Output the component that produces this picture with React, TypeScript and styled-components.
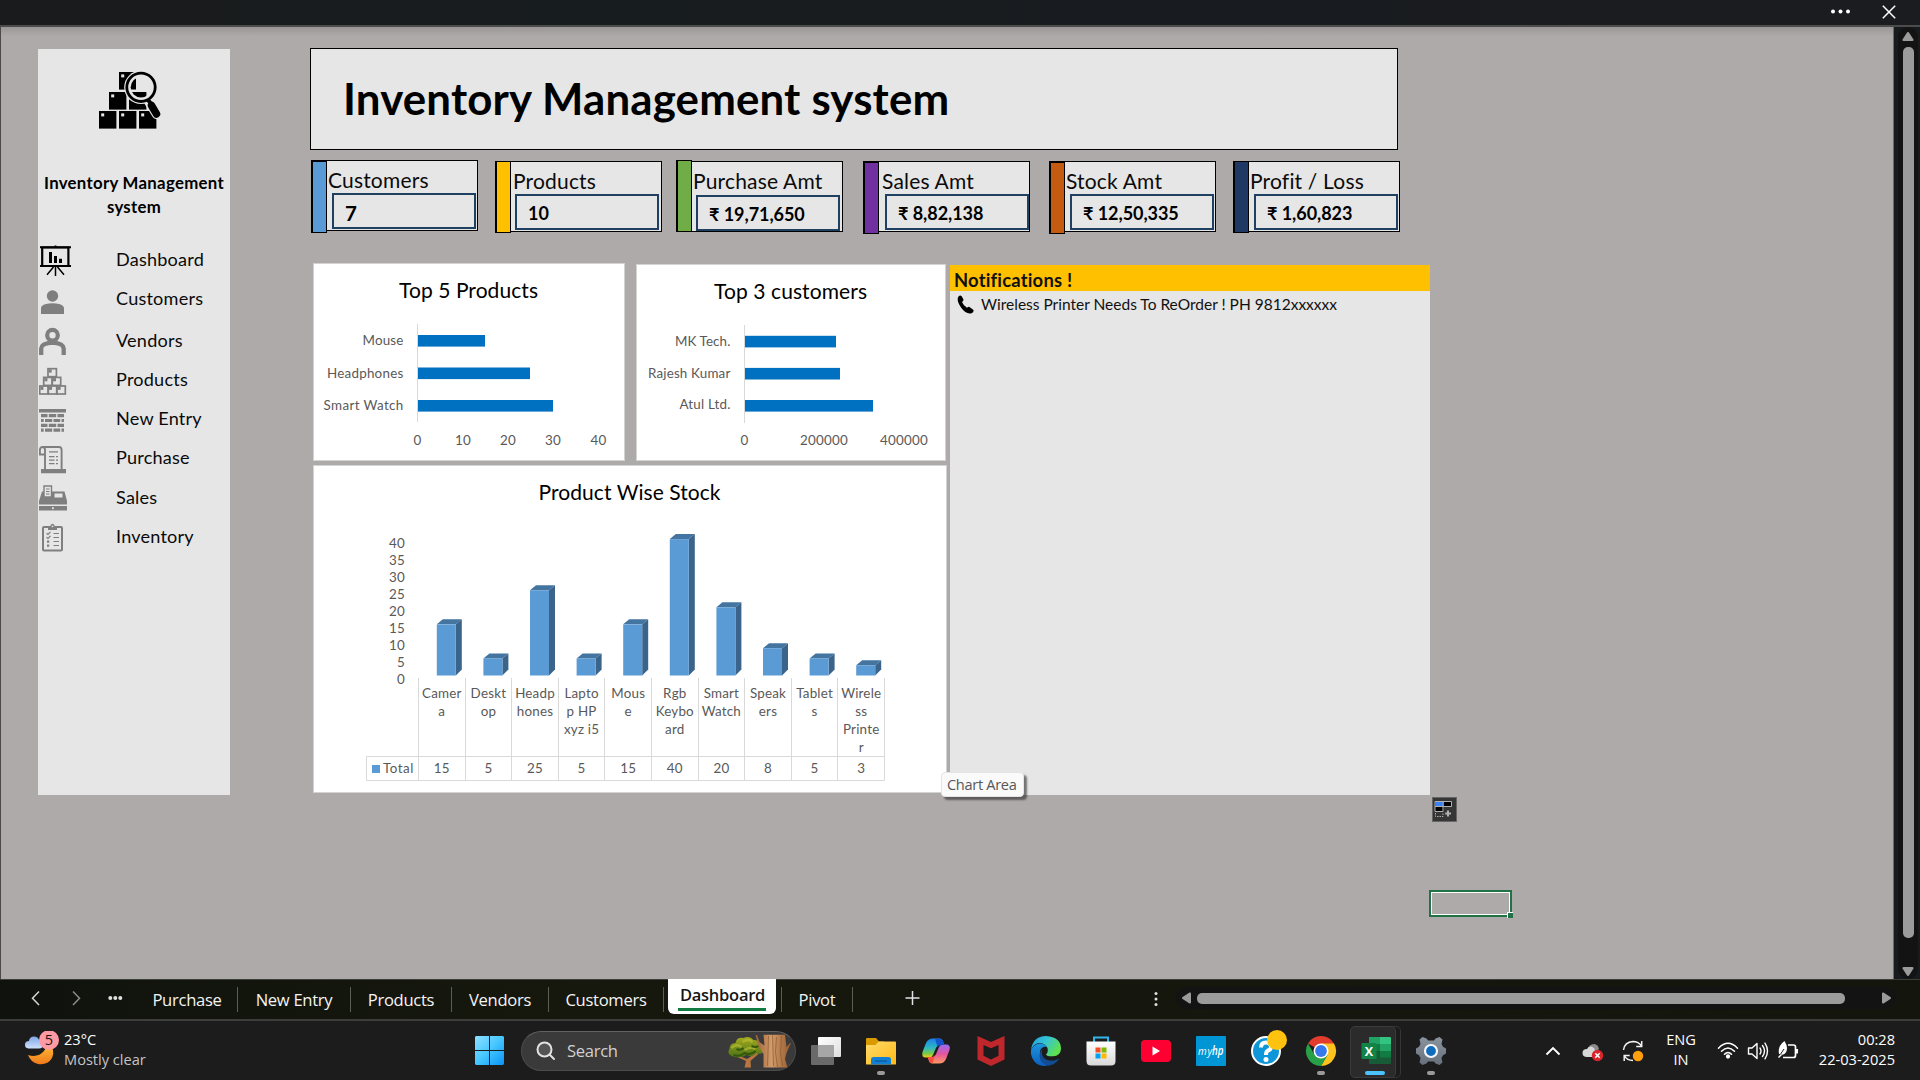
import React from 'react';
import styled, { createGlobalStyle } from 'styled-components';

const calibri = 'Lato, "Open Sans", "DejaVu Sans", sans-serif';
const segoe = '"Open Sans", "Noto Sans", sans-serif';

const GlobalStyle = createGlobalStyle`
  * { box-sizing: border-box; }
  body { margin: 0; background: #1c1c1c; overflow: hidden; }
  svg { display: block; flex: none; }
`;

const Screen = styled.div`
  width: 1920px;
  height: 1080px;
  display: flex;
  flex-direction: column;
  overflow: hidden;
  font-family: ${calibri};
`;

/* ---------- window chrome ---------- */

const TitleBar = styled.div`
  height: 27px;
  flex: none;
  display: flex;
  justify-content: flex-end;
  background: linear-gradient(90deg, #1a1b1c, #171c1f 30%, #1b1c20);
  border-bottom: 2px solid #4c4c4d;
`;

const Workspace = styled.div`
  display: flex;
  height: 952px;
  flex: none;
`;

const Sheet = styled.div`
  position: relative;
  display: flex;
  align-items: flex-start;
  width: 1894px;
  height: 952px;
  border-left: 1px solid #4a4a4a;
  border-right: 1px solid #6a6868;
  background: linear-gradient(#999695, #aeaaa9 9px) #aeaaa9;
`;

const VScroll = styled.div`
  width: 26px;
  padding: 0 2px 0 4px;
  background: #171b1d;
`;

const VTrack = styled.div`
  display: flex;
  flex-direction: column;
  align-items: center;
  height: 952px;
  padding-top: 5px;
  border-radius: 10px;
  background: #131313;
`;

const VThumb = styled.div`
  width: 11px;
  height: 891px;
  margin: 6px 0 29px;
  border-radius: 5px;
  background: #9b9b9b;
`;

/* ---------- sidebar ---------- */

const Sidebar = styled.div`
  width: 192px;
  height: 746px;
  margin: 22px 0 0 37px;
  background: #e6e6e6;
`;

const LogoBox = styled.div`
  padding: 22px 0 0 60px;
  height: 122px;
`;

const SideTitle = styled.div`
  height: 69px;
  text-align: center;
  font-weight: 700;
  font-size: 16.8px;
  line-height: 24px;
  letter-spacing: 0.3px;
  color: #000;
`;

const NavItem = styled.div<{ $gap?: number }>`
  display: flex;
  align-items: center;
  height: 39px;
  margin-top: ${(p) => p.$gap || 0}px;
  padding-left: 1px;
  font-size: 18.1px;
  letter-spacing: 0.2px;
  color: #0a0a0a;
`;

const NavLabel = styled.span<{ $low?: boolean }>`
  margin-left: 44px;
  line-height: ${(p) => (p.$low ? 40 : 38)}px;
  height: 39px;
`;

/* ---------- main ---------- */

const Main = styled.div`
  margin-left: 80px;
  padding-top: 21px;
  width: 1130px;
`;

const Banner = styled.div`
  width: 1088px;
  height: 102px;
  padding-left: 32px;
  border: 1px solid #000;
  background: #e6e6e6;
  color: #000;
  font-size: 43.8px;
  font-weight: 700;
  line-height: 99px;
  letter-spacing: 0.17px;
`;

const Cards = styled.div`
  display: grid;
  grid-template-columns: 184px 181px 187px 186px 184px 168px;
  height: 71px;
  margin: 11px 0 0 1px;
`;

const Card = styled.div<{ $up: number }>`
  display: flex;
  width: 167px;
  height: 71px;
  margin-top: ${(p) => -p.$up}px;
  border: 1px solid #000;
  background: #e6e6e6;
`;

const Strip = styled.div<{ $color: string; $dy: number }>`
  flex: none;
  width: 16px;
  height: 72px;
  margin: ${(p) => p.$dy - 1}px 0 0 -1px;
  border: 1px solid #000;
  border-width: 1px 1px 1px 2px;
  background: ${(p) => p.$color};
`;

const CardBody = styled.div`
  flex: 1;
`;

const CardLabel = styled.div<{ $x: number }>`
  height: 32px;
  padding-left: ${(p) => p.$x}px;
  font-size: 21px;
  line-height: 38px;
  letter-spacing: 0.18px;
  white-space: nowrap;
  color: #0b0b0b;
`;

const CardValue = styled.div<{ $x: number; $dy: number; $big?: boolean }>`
  width: 144px;
  height: 36px;
  margin: ${(p) => p.$dy}px 0 0 ${(p) => p.$x}px;
  padding-left: 11px;
  border: 2px solid #1f4060;
  font-weight: 700;
  font-size: ${(p) => (p.$big ? 20.5 : 18)}px;
  line-height: ${(p) => (p.$big ? 37 : 34)}px;
  letter-spacing: -0.05px;
  white-space: nowrap;
  color: #000;
`;

const Panels = styled.div`
  display: flex;
  align-items: flex-start;
  margin: 31px 0 0 3px;
`;

const Charts = styled.div`
  width: 637px;
`;

const ChartRow = styled.div`
  display: flex;
  gap: 11px;
  align-items: flex-end;
  margin-bottom: 4px;
`;

const ChartCard = styled.div<{ $w: number; $h: number }>`
  width: ${(p) => p.$w}px;
  height: ${(p) => p.$h}px;
  background: #fff;
  outline: 1px solid #d4d3d3;
  outline-offset: -1px;
`;

const ChartTitle = styled.text`
  font-family: ${calibri};
  font-size: 21px;
  fill: #000;
  text-anchor: middle;
`;

const ChartText = styled.text<{ $anchor?: string }>`
  font-family: ${calibri};
  font-size: 13.4px;
  letter-spacing: 0.2px;
  fill: #595959;
  text-anchor: ${(p) => p.$anchor || 'middle'};
`;

const Notes = styled.div`
  width: 480px;
  height: 530px;
  margin-top: 2px;
  background: #e6e6e6;
`;

const NotesHead = styled.div`
  height: 26px;
  padding-left: 4px;
  background: #ffc000;
  font-size: 18.4px;
  font-weight: 700;
  line-height: 30px;
  letter-spacing: 0.2px;
  color: #111;
`;

const NoteRow = styled.div`
  display: flex;
  align-items: center;
  height: 27px;
  padding-left: 7px;
  gap: 7px;
  font-size: 15.5px;
  line-height: 27px;
  color: #111;
  white-space: nowrap;
`;

const Tooltip = styled.div`
  position: absolute;
  left: 940px;
  top: 745px;
  width: 83px;
  height: 25px;
  padding-left: 5px;
  border: 1px solid #e4e4e4;
  border-radius: 4px;
  background: #fafafa;
  box-shadow: 3px 3px 2px rgba(40, 40, 40, 0.6);
  font: 14.6px/23px ${segoe};
  letter-spacing: -0.32px;
  color: #575757;
  white-space: nowrap;
`;

const QuickButton = styled.div`
  position: absolute;
  left: 1431px;
  top: 770px;
  width: 25px;
  height: 25px;
  border: 1px solid #666;
  background: #363636;
`;

const Selection = styled.div`
  position: absolute;
  left: 1428px;
  top: 863px;
  width: 83px;
  height: 27px;
  border: 2px solid #217346;
  box-shadow: inset 0 0 0 1px #fff;
`;

const FillHandle = styled.div`
  position: absolute;
  right: -3px;
  bottom: -3px;
  width: 6px;
  height: 6px;
  border: solid #fff;
  border-width: 1px 0 0 1px;
  background: #217346;
`;

/* ---------- sheet tabs ---------- */

const TabBar = styled.div`
  display: flex;
  flex: none;
  height: 42px;
  border-top: 1px solid #3c3f38;
  border-bottom: 2px solid #3d3d3c;
  background: linear-gradient(90deg, #10130d, #16180d 30%, #14160e);
  font-family: ${segoe};
`;

const TabNav = styled.div`
  width: 137px;
`;

const Tab = styled.div<{ $w: number }>`
  display: flex;
  align-items: center;
  justify-content: space-between;
  width: ${(p) => p.$w}px;
  height: 38px;
  font-size: 16.6px;
  letter-spacing: -0.3px;
  color: #f4f4f4;
  &::after {
    content: '';
    width: 1px;
    height: 25px;
    background: #5b5d56;
  }
  &::before {
    content: '';
  }
`;

const ActiveSlot = styled.div`
  display: flex;
  align-items: center;
  justify-content: space-between;
  width: 118px;
  height: 38px;
  padding-left: 4px;
  &::after {
    content: '';
    width: 1px;
    height: 25px;
    background: #5b5d56;
  }
`;

const ActiveTab = styled.div`
  width: 108px;
  height: 35px;
  margin-top: -5px;
  padding: 0 9px 0 10px;
  border-radius: 0 0 6px 6px;
  background: #fff;
  color: #161616;
  font-size: 16.5px;
  font-weight: 600;
  line-height: 31px;
  letter-spacing: -0.25px;
  text-align: center;
  white-space: nowrap;
`;

const TabLine = styled.div`
  width: 88px;
  height: 3px;
  margin-top: -2px;
  background: #107c41;
`;

const HScroll = styled.div`
  display: flex;
  align-items: center;
  width: 720px;
  height: 22px;
  margin: 7px 0 0 9px;
  padding-left: 6px;
  border-radius: 11px;
  background: #131313;
`;

const HThumb = styled.div`
  width: 648px;
  height: 11px;
  margin: 0 37px 0 6px;
  border-radius: 5px;
  background: #9b9b9b;
`;

/* ---------- taskbar ---------- */

const Taskbar = styled.div`
  display: flex;
  align-items: center;
  height: 59px;
  flex: none;
  background: #1c1c1c;
  font-family: ${segoe};
`;

const Weather = styled.div`
  display: flex;
  align-items: center;
  gap: 4px;
  width: 475px;
  padding-left: 24px;
`;

const Lines = styled.div<{ $align?: string; $w?: number; $pad?: number }>`
  width: ${(p) => (p.$w ? p.$w + 'px' : 'auto')};
  margin-top: -4px;
  padding-right: ${(p) => p.$pad || 0}px;
  text-align: ${(p) => p.$align || 'left'};
  font-size: 14.6px;
  line-height: 20px;
  letter-spacing: 0;
  color: #fff;
  white-space: nowrap;
`;

const Dim = styled.div`
  color: #c4c4c4;
`;

const SearchBox = styled.div`
  display: flex;
  align-items: center;
  width: 275px;
  height: 40px;
  margin: 0 2px 0 17px;
  padding: 0 3px 0 14px;
  border: 1px solid #4c4c4c;
  border-top-color: #616161;
  border-radius: 20px;
  background: #3a3a3a;
  color: #d0d0d0;
  font-size: 16.6px;
  letter-spacing: -0.3px;
`;

const SearchText = styled.span`
  flex: 1;
  margin: -1px 0 0 11px;
`;

const AppSlot = styled.div<{ $active?: boolean }>`
  position: relative;
  display: flex;
  align-items: center;
  justify-content: center;
  width: 55px;
  height: 50px;
  ${(p) =>
    p.$active &&
    `&::before { content: ''; position: absolute; left: 2px; top: 0; width: 44px; height: 50px; border: 1px solid #3b3b3b; border-radius: 5px; background: #2b2b2b; }
     &::after { content: ''; position: absolute; left: 44px; top: 0; width: 8px; height: 50px; border: solid #353535; border-width: 1px 1px 1px 0; border-radius: 0 5px 5px 0; }`}
  svg { position: relative; }
`;

const Running = styled.div<{ $active?: boolean }>`
  position: absolute;
  bottom: 1px;
  left: ${(p) => (p.$active ? 17 : 24)}px;
  width: ${(p) => (p.$active ? 20 : 8)}px;
  height: 4px;
  border-radius: 2px;
  background: ${(p) => (p.$active ? '#4cc2ff' : '#9a9a9a')};
`;

const Tray = styled.div`
  display: flex;
  align-items: center;
  margin-left: auto;
`;

const TraySlot = styled.div<{ $w: number }>`
  display: flex;
  justify-content: center;
  width: ${(p) => p.$w}px;
`;

/* ---------- drawings ---------- */

const LogoBoxes = () => (
  <>
    {[
      [119, 72], [109, 92], [129, 92], [99, 111], [119, 111], [139, 111],
    ].map(([x, y]) => (
      <g key={`${x}-${y}`}>
        <rect x={x} y={y} width="17.4" height="17.6" />
        <rect x={x + 2.2} y={y + 2.4} width="3" height="3" fill="#e6e6e6" />
      </g>
    ))}
  </>
);

const Logo = () => (
  <svg width="64" height="60" viewBox="98 71 64 60">
    <defs>
      <clipPath id="lens"><circle cx="141" cy="87.3" r="10.3" /></clipPath>
    </defs>
    <LogoBoxes />
    <path d="M149 101l8 13" stroke="#e6e6e6" strokeWidth="10.5" strokeLinecap="round" />
    <circle cx="141" cy="87.3" r="16.8" fill="#e6e6e6" />
    <g clipPath="url(#lens)">
      <path d="M130 78h6v11.6h-6zM129 92h17.4v6H129z" />
    </g>
    <circle cx="141" cy="87.3" r="14.2" fill="none" stroke="#000" strokeWidth="2.8" />
    <path d="M147.5 99.5l3 3.5" stroke="#000" strokeWidth="4" />
    <path d="M151.5 105.5l5 8.5" stroke="#000" strokeWidth="7.5" strokeLinecap="round" />
  </svg>
);

const NavIcon = ({ children, dark }: { children: React.ReactNode; dark?: boolean }) => (
  <svg width="33" height="39" viewBox="0 0 33 39" fill={dark ? '#000' : '#7f7f7f'} stroke="none">
    {children}
  </svg>
);

const G = '#7f7f7f';

const DashboardIcon = () => (
  <NavIcon dark>
    <path d="M1 7.2h31M1 26h31" stroke="#000" strokeWidth="2" />
    <path d="M3.2 7.5v18.5h26.2V7.5z" fill="none" stroke="#000" strokeWidth="2.2" />
    <path d="M10 12h3v11h-3zM15 16h3v7h-3zM20 18.7h3v4.3h-3zM15.6 5.5h1.8V7h-1.8z" />
    <path d="M16.5 26v10M14.5 27L8 34.8M18.5 27l6.5 7.8" stroke="#000" strokeWidth="1.5" />
  </NavIcon>
);
const CustomerIcon = () => (
  <NavIcon>
    <circle cx="13.5" cy="17" r="5.7" />
    <path d="M2 35v-5.5Q2 26.5 6 25.3Q13.5 23 21 25.3Q25 26.5 25 29.5V35z" />
  </NavIcon>
);
const VendorIcon = () => (
  <NavIcon>
    <circle cx="13.5" cy="14.2" r="5.3" fill="none" stroke={G} strokeWidth="4.2" />
    <path d="M2.2 34v-6.5Q2.5 22.3 13.5 21.7Q24.3 22.3 24.7 27.5V34" fill="none" stroke={G} strokeWidth="4.3" />
  </NavIcon>
);
const ProductsIcon = () => (
  <NavIcon>
    {[[9, 8.7], [4.7, 17.4], [13.3, 17.4], [0.7, 26], [9.3, 26], [17.9, 26]].map(([x, y]) => (
      <g key={`${x}-${y}`}>
        <rect x={x} y={y} width="8.4" height="8" fill="none" stroke={G} strokeWidth="1.7" />
        <path d={`M${x + 0.7} ${y + 0.7}h3v3.2h-3z`} />
      </g>
    ))}
  </NavIcon>
);
const WallIcon = () => (
  <NavIcon>
    <path d="M0 10h27v3.5H0z" />
    <path d="M2 15h6.5v3.2H2zM9.8 15h7.4v3.2H9.8zM18.5 15H25v3.2h-6.5zM2 19.9h2.7v3.2H2zM6 19.9h7.2v3.2H6zM14.5 19.9h6.7v3.2h-6.7zM22.5 19.9H25v3.2h-2.5zM2 24.7h6.5v3.2H2zM9.8 24.7h7.4v3.2H9.8zM18.5 24.7H25v3.2h-6.5zM2 29.5h2.7v3.2H2zM6 29.5h7.2v3.2H6zM14.5 29.5h6.7v3.2h-6.7zM22.5 29.5H25v3.2h-2.5z" />
  </NavIcon>
);
const ScrollIcon = () => (
  <NavIcon>
    <path d="M6 31V11.5Q5.5 9 3.5 9Q0.9 9 0.9 12v4.5h5M3.5 9H20q2.6 0 2.6 3v19" fill="none" stroke={G} strokeWidth="1.9" />
    <path d="M2 31h25v4.2H2zM10 13.3h9v1.3h-9zM10 18h5.5v1.3H10zM10 21.5h5.5v1.3H10zM10 25h5.5v1.3H10zM17 18h2v1.3h-2zM17 21.5h2v1.3h-2zM17 25h2v1.3h-2z" />
  </NavIcon>
);
const RegisterIcon = () => (
  <NavIcon>
    <path d="M3 14.5h22.5L28 24v3.5H0V24zM0 29h28v4.5H0z" />
    <path d="M5 9h7.5v11H5z" fill="#e6e6e6" stroke={G} strokeWidth="1.4" />
    <path d="M7 12h3.5M7 14.5h3.5M7 17h3.5" stroke={G} />
    <path d="M15.5 16.5h8v4h-8z" fill="#e6e6e6" />
    <rect x="13" y="30.3" width="1.8" height="1.8" fill="#e6e6e6" />
  </NavIcon>
);
const ClipboardIcon = () => (
  <NavIcon>
    <rect x="4" y="11" width="19" height="23.5" rx="1" fill="none" stroke={G} strokeWidth="2" />
    <path d="M9 14v-3.5h2.2Q11.5 7.8 13.5 7.8T15.8 10.5H18V14z" />
    <circle cx="13.5" cy="10.3" r="0.9" fill="#e6e6e6" />
    <path d="M14.5 17.5H20M14.5 21.5H20M14.5 25.5H20M14.5 29.5H20" stroke={G} strokeWidth="1.2" />
    <path d="M7.5 17.2l1.5 1.3 2.5-2.7M7.5 21.2l1.5 1.3 2.5-2.7" fill="none" stroke={G} strokeWidth="1.2" />
    <path d="M8 24.5h2.2v2.2H8zM8 28.5h2.2v2.2H8z" />
  </NavIcon>
);

const nav = [
  { label: 'Dashboard', Icon: DashboardIcon },
  { label: 'Customers', Icon: CustomerIcon },
  { label: 'Vendors', Icon: VendorIcon, gap: 3 },
  { label: 'Products', Icon: ProductsIcon },
  { label: 'New Entry', Icon: WallIcon },
  { label: 'Purchase', Icon: ScrollIcon },
  { label: 'Sales', Icon: RegisterIcon, low: true },
  { label: 'Inventory', Icon: ClipboardIcon, low: true },
];

const cards = [
  { label: 'Customers', value: '7', color: '#5b9bd5', up: 1, strip: 1, lx: 1, bx: 5, by: 0, big: true },
  { label: 'Products', value: '10', color: '#ffc000', up: 0, strip: 0, lx: 2, bx: 4, by: 0 },
  { label: 'Purchase Amt', value: '₹ 19,71,650', color: '#70ad47', up: 0, strip: -1, lx: 1, bx: 4, by: 1 },
  { label: 'Sales Amt', value: '₹ 8,82,138', color: '#7030a0', up: 0, strip: 1, lx: 3, bx: 6, by: 0 },
  { label: 'Stock Amt', value: '₹ 12,50,335', color: '#c55a11', up: 0, strip: 1, lx: 1, bx: 5, by: 0 },
  { label: 'Profit / Loss', value: '₹ 1,60,823', color: '#1f3864', up: 0, strip: 0, lx: 1, bx: 5, by: 0 },
];

type Row = [string, number, number, number];

const BarChart = ({
  x, y, w, h, title, tx, ty, tl, axisX, labelX, rows, ticks, base, dy,
}: {
  x: number; y: number; w: number; h: number; title: string; tx: number; ty: number; tl: number;
  axisX: number; labelX: number; rows: Row[]; ticks: [string, number][]; base: number; dy: number;
}) => (
  <svg width={w} height={h} viewBox={`${x} ${y} ${w} ${h}`}>
    <ChartTitle x={tx} y={ty} textLength={tl}>{title}</ChartTitle>
    <path d={`M${axisX - 0.5} ${base}v98`} stroke="#d9d9d9" />
    {rows.map(([name, end, ly, len], i) => (
      <g key={name}>
        <ChartText $anchor="end" x={labelX} y={ly} textLength={len}>{name}</ChartText>
        <rect x={axisX} y={335 + dy + i * (32.5 - dy / 2)} width={end - axisX} height="11.6" fill="#0070c0" />
      </g>
    ))}
    {ticks.map(([t, cx]) => (
      <ChartText key={t} x={cx} y="445">{t}</ChartText>
    ))}
  </svg>
);

const stock: [string[], number][] = [
  [['Camer', 'a'], 15],
  [['Deskt', 'op'], 5],
  [['Headp', 'hones'], 25],
  [['Lapto', 'p HP', 'xyz i5'], 5],
  [['Mous', 'e'], 15],
  [['Rgb', 'Keybo', 'ard'], 40],
  [['Smart', 'Watch'], 20],
  [['Speak', 'ers'], 8],
  [['Tablet', 's'], 5],
  [['Wirele', 'ss', 'Printe', 'r'], 3],
];

const StockChart = () => {
  const x0 = 418;
  const step = 46.6;
  const right = x0 + step * 10;
  return (
    <svg width="634" height="328" viewBox="313 465 634 328">
      <ChartTitle x="629.5" y="500" textLength="182">Product Wise Stock</ChartTitle>
      {[40, 35, 30, 25, 20, 15, 10, 5, 0].map((v, i) => (
        <ChartText key={v} $anchor="end" x="405" y={548 + i * 17}>{v}</ChartText>
      ))}
      <g stroke="#d9d9d9" fill="none">
        {stock.map((_, i) => (
          <path key={i} d={`M${Math.round(x0 + i * step) + 0.5} 678v102.5`} />
        ))}
        <path d={`M${Math.round(right) + 0.5} 678v102.5H366.5v-24H${Math.round(right) + 0.5}`} />
      </g>
      <rect x="372" y="765" width="8" height="8" fill="#5b9bd5" />
      <ChartText $anchor="start" x="383" y="772.5" textLength="30.5">Total</ChartText>
      {stock.map(([lines, v], i) => {
        const left = 436.8 + i * step;
        const top = 675.5 - v * 3.41;
        const cx = x0 + 0.5 + (i + 0.5) * step;
        return (
          <g key={i}>
            <path d={`M${left} ${top}l6-5h19l-6 5z`} fill="#4474a0" />
            <path d={`M${left + 19} ${top}l6-5V669.5l-6 6z`} fill="#3b648a" />
            <rect x={left} y={top} width="19" height={675.5 - top} fill="#5b9bd5" />
            {lines.map((line, n) => (
              <ChartText key={n} x={cx} y={698 + n * 18.1}>{line}</ChartText>
            ))}
            <ChartText x={cx} y="773">{v}</ChartText>
          </g>
        );
      })}
    </svg>
  );
};

const WeatherIcon = () => (
  <svg width="36" height="40" viewBox="0 0 36 40">
    <defs>
      <linearGradient id="moon" x1="0" y1="0" x2="0" y2="1"><stop offset="0" stopColor="#ffc53a" /><stop offset="1" stopColor="#f07a1b" /></linearGradient>
      <linearGradient id="cloud" x1="0" y1="0" x2="0" y2="1"><stop offset="0" stopColor="#7ea6e8" /><stop offset="1" stopColor="#cfe0fb" /></linearGradient>
    </defs>
    <path d="M24 11Q32 19 28 27Q23.500 34.500 14 33Q6.500 31 4 24Q14 27 20 20Q23 16 22 11z" fill="url(#moon)" />
    <path d="M4.5 17.5Q.5 17 1 13Q1.500 10 5 10Q5.500 5.500 10 5.500Q14 5.500 15 9Q19 10 19 13.500Q19 17.500 15 17.500z" fill="url(#cloud)" />
    <ellipse cx="25" cy="9" rx="10" ry="9.8" fill="#ff99a4" />
    <text x="25" y="14.200" textAnchor="middle" fontSize="14.5" fontFamily="Open Sans, sans-serif" fill="#151515">5</text>
  </svg>
);

const StartIcon = () => (
  <svg width="29" height="29" viewBox="0 0 29 29">
    <defs><linearGradient id="win" x1="0" y1="0" x2="1" y2="1"><stop offset="0" stopColor="#8fe0ff" /><stop offset=".5" stopColor="#45c6ff" /><stop offset="1" stopColor="#0a93f5" /></linearGradient></defs>
    <path d="M1 0h13v14H0V1zM15 0h13l1 1v13H15zM0 15h14v14H1l-1-1zM15 15h14v13l-1 1H15z" fill="url(#win)" />
  </svg>
);

const TreeArt = () => (
  <svg width="65" height="34" viewBox="0 0 64 34">
    <defs>
      <linearGradient id="trunk"><stop offset="0" stopColor="#9c6238" /><stop offset=".45" stopColor="#d29b6a" /><stop offset="1" stopColor="#93592b" /></linearGradient>
      <linearGradient id="leaf" x1="0" y1="0" x2="0" y2="1"><stop offset="0" stopColor="#a5ab20" /><stop offset="1" stopColor="#4b7414" /></linearGradient>
    </defs>
    <path d="M17 33.5l1.5-6.500-11-5 2-1 10 4 9-6 3 .5-8.500 7.500.5 6.500z" fill="#b87542" />
    <path d="M4 22Q-1 20 2 15Q2 9 8 9Q9 3 16 4Q22 1 26 6Q32 6 32 11Q37 14 36 17Q35 21 29 19Q25 24 19 21Q12 25 4 22z" fill="url(#leaf)" />
    <path d="M4 14q5-5 10-1M15 8q6-4 10 0M17 16q6-4 11-1" stroke="#b9bd35" strokeWidth="2.5" fill="none" opacity=".65" />
    <path d="M6 21q7 2 11-2 6 3 11-2M9 15q4 2 7-1M24 12q4 2 7 0" stroke="#35580f" strokeWidth="2" fill="none" />
    <path d="M28 1h1.5l2.500 7 5 3.500L36 .8h21.500L59 13l3.500-4h1L59 19l-1.500 6 2.500 8.500H36V20l-5-8z" fill="url(#trunk)" />
    <path d="M41 2l-1 30M45 1l1 31M49 3l-1 15 2 15M54 2l-1 17 2 13" stroke="#84502a" strokeWidth="1" fill="none" opacity=".6" />
  </svg>
);

const AppIcon = ({ children }: { children: React.ReactNode }) => (
  <svg width="34" height="34" viewBox="-17 -17 34 34">{children}</svg>
);

const TaskViewIcon = () => (
  <AppIcon>
    <defs><linearGradient id="tv" x1="0" y1="0" x2="1" y2="1"><stop offset="0" stopColor="#fff" /><stop offset="1" stopColor="#dedede" /></linearGradient></defs>
    <rect x="-8" y="-14" width="23" height="20" rx="1" fill="url(#tv)" />
    <rect x="-15" y="-6" width="23" height="20" rx="1" fill="#6a6a6a" />
    <path d="M-8-6H8V6H-8z" fill="#a6a6a6" />
  </AppIcon>
);
const FolderIcon = () => (
  <AppIcon>
    <defs><linearGradient id="fo" x1="0" y1="0" x2="1" y2="1"><stop offset="0" stopColor="#ffdb6b" /><stop offset="1" stopColor="#ffb914" /></linearGradient></defs>
    <path d="M-15-12q0-1 1-1h9l3 3.5h5V-5h-18z" fill="#d99a00" />
    <path d="M-15-6h9.5l3-3.5H14q1 0 1 1V13q0 .5-1 .5h-28q-1 0-1-.5z" fill="url(#fo)" />
    <path d="M-10 13.5v-5q0-2.500 2.500-2.500H7.500Q10 6 10 8.500v5z" fill="#1180d4" />
    <path d="M-6 10H6" stroke="#0b5696" strokeWidth="1.2" />
  </AppIcon>
);
const CopilotIcon = () => (
  <AppIcon>
    <defs>
      <linearGradient id="c1" x1="0" y1="0" x2="0" y2="1"><stop offset="0" stopColor="#1d7fe8" /><stop offset=".5" stopColor="#2eb8c2" /><stop offset=".8" stopColor="#7fc940" /><stop offset="1" stopColor="#f5cb1c" /></linearGradient>
      <linearGradient id="c2" x1="0" y1="0" x2="0" y2="1"><stop offset="0" stopColor="#9a6bf5" /><stop offset=".5" stopColor="#e2559d" /><stop offset="1" stopColor="#ff9a62" /></linearGradient>
    </defs>
    <path d="M-3-12.500H3.500Q6.500-12.500 7.300-9L8.300-6H4Q1-6-.5-2L-3 4Q-4 6.500-7 6.500H-10Q-15 6.500-13.500 1L-10-8Q-8-12.500-3-12.500z" fill="url(#c1)" />
    <path d="M3 12.500H-3.500Q-6.500 12.500-7.300 9L-8.300 6H-4Q-1 6 .5 2L3-4Q4-6.500 7-6.500H10Q15-6.500 13.500-1L10 8Q8 12.500 3 12.500z" fill="url(#c2)" />
    <path d="M-1-12.500H3.500Q6.500-12.500 7.300-9L8.300-6H4.500Q2.500-6 1.500-4z" fill="#1754c9" />
    <path d="M-8.300 6H-4Q-2 6-1 4L-3.500 12.500Q-6.500 12.500-7.300 9z" fill="#f5503c" />
  </AppIcon>
);
const McAfeeIcon = () => (
  <AppIcon>
    <path d="M-13.500-15L0-9 13.500-15V8.500L0 15-13.500 8.500zM-7.500-6V4.800L0 8.500 7.500 4.800V-6L0-2.700z" fill="#c0272d" fillRule="evenodd" />
  </AppIcon>
);
const EdgeIcon = () => (
  <AppIcon>
    <defs>
      <linearGradient id="e1" x1="0" y1="0" x2="1" y2=".5"><stop offset="0" stopColor="#1d9de0" /><stop offset=".5" stopColor="#35c5d4" /><stop offset="1" stopColor="#5fe04e" /></linearGradient>
      <linearGradient id="e2" x1="0" y1="0" x2="0" y2="1"><stop offset="0" stopColor="#1b96dc" /><stop offset="1" stopColor="#0d5fc0" /></linearGradient>
    </defs>
    <path d="M-15-1Q-13-15 0-15Q15-14 15-2Q14.500 5 7 5.200Q0 5.500 0 3.500Q2.500 1 1.500-3Q-1-8-7-8Q-13-7-15-1z" fill="url(#e1)" />
    <path d="M-15-1Q-12-7.500-6-7.500Q-1-7.500 1-4Q-4-5-6 0Q-7 9 1 14.800Q-12 16-15 3z" fill="url(#e2)" />
    <path d="M-4-1.500Q-5 9 5 9.500Q10 9.500 13.500 7.500Q9 14 2 14.800Q-6 13-6.500 5Q-6 0-4-1.500z" fill="#124c93" />
    <path d="M-1-1.500Q-2 4 3 6.500Q9 7.500 13 4.500L14.500 6 8 9.500Q-2 10-4 3Q-4-1-1-1.500z" fill="#1c1c1c" />
  </AppIcon>
);
const StoreIcon = () => (
  <AppIcon>
    <defs><linearGradient id="st" x1="0" y1="0" x2="0" y2="1"><stop offset="0" stopColor="#fff" /><stop offset="1" stopColor="#d9d9d9" /></linearGradient></defs>
    <path d="M-7-9v-4.500h14v4.500" fill="none" stroke="#2fb5ea" strokeWidth="2" />
    <path d="M-14.500-9.500h29V10q0 4.500-4.500 4.500h-20q-4.500 0-4.500-4.500z" fill="url(#st)" />
    <path d="M-5.500-3.500h5v5h-5z" fill="#f25022" /><path d="M.5-3.500h5v5h-5z" fill="#7fba00" />
    <path d="M-5.500 2.500h5v5h-5z" fill="#00a4ef" /><path d="M.5 2.500h5v5h-5z" fill="#ffb900" />
  </AppIcon>
);
const YoutubeIcon = () => (
  <AppIcon>
    <rect x="-15" y="-11" width="30" height="22" rx="4" fill="#ff0033" />
    <path d="M-3.500-4.500L4 0l-7.500 4.500z" fill="#fff" />
  </AppIcon>
);
const HpIcon = () => (
  <AppIcon>
    <rect x="-15" y="-15" width="30" height="30" rx="1" fill="#0096d6" />
    <text x="-13" y="3.5" fontSize="10" fontStyle="italic" fontFamily="Open Sans, sans-serif" fill="#fff" textLength="14">my</text>
    <text x="1" y="3.8" fontSize="13" fontWeight="600" fontStyle="italic" fontFamily="Open Sans, sans-serif" fill="#fff" textLength="11.5" lengthAdjust="spacingAndGlyphs">hp</text>
  </AppIcon>
);
const HelpIcon = () => (
  <svg width="38" height="42" viewBox="-17 -21 38 42">
    <circle r="14" fill="#0d96d8" stroke="#fff" strokeWidth="2" />
    <path d="M-5-3.500Q-5-8.500 0-8.500T5-4Q5-1.500 2-.5Q0 .5 0 4" fill="none" stroke="#fff" strokeWidth="4" />
    <circle cy="8.5" r="2.5" fill="#fff" />
    <circle cx="11" cy="-11" r="10" fill="#ffc20e" />
  </svg>
);
const HelpWrap = styled.div`
  margin: 0 -4px 0 0;
`;
const ChromeIcon = () => (
  <AppIcon>
    <path d="M0 0L-13-7.500A15 15 0 0 1 13-7.500z" fill="#e33b2e" />
    <path d="M0-7.500H13A15 15 0 0 1 0 15L6.500 3.750z" fill="#fcc31e" />
    <path d="M-13-7.500A15 15 0 0 0 0 15L6.500 3.750-6.500 3.750z" fill="#28a047" />
    <circle r="7.5" fill="#fff" />
    <circle r="5.9" fill="#3778ec" />
  </AppIcon>
);
const ExcelIcon = () => (
  <AppIcon>
    <path d="M-7-14H4v7H-7z" fill="#21a366" /><path d="M4-14h10q1 0 1 1v6H4z" fill="#33c481" />
    <path d="M-7-7H4V0H-7z" fill="#107c41" /><path d="M4-7h11V0H4z" fill="#21a366" />
    <path d="M-7 0H4v7H-7z" fill="#185c37" /><path d="M4 0h11v7H4z" fill="#107c41" />
    <path d="M-7 6.500H15V12q0 1-1 1H-6q-1 0-1-1z" fill="#185c37" />
    <rect x="-14.5" y="-8" width="15" height="16" rx="1" fill="#128448" />
    <text x="-7" y="4.7" fontSize="12.5" fontWeight="700" textAnchor="middle" fontFamily="Open Sans, sans-serif" fill="#fff">X</text>
  </AppIcon>
);
const SettingsIcon = () => (
  <AppIcon>
    <defs><linearGradient id="gear" x1="0" y1="0" x2="0" y2="1"><stop offset="0" stopColor="#8b949e" /><stop offset="1" stopColor="#66707b" /></linearGradient></defs>
    <path d="M-8.500-14l4 1.500L-3-10.500h6l1.500-2L8.500-14l3 2.500-1 4.500 1.500 2.800L15-2.500v5l-3 1.700L10.500 7l1 4.500-3 2.500-4-1.500L3 10.500h-6l-1.500 2L-8.500 14l-3-2.500 1-4.500L-12 4.200-15 2.500v-5l3-1.700L-10.500-7l-1-4.500z" fill="url(#gear)" />
    <circle r="6" fill="#0f6cbd" stroke="#f3f6fa" strokeWidth="2.2" />
  </AppIcon>
);

const CloudError = () => (
  <svg width="24" height="24" viewBox="0 0 24 24">
    <path d="M7 11Q8 5 13 5Q17 5.500 18 10l-6 5z" fill="#8c8c8c" />
    <path d="M6 18Q1.500 18 1.500 14T6 10Q8 6.500 11.500 8Q14 9 14 12l4 6z" fill="#d7d7d7" />
    <circle cx="16.5" cy="16.5" r="5.7" fill="#d9262d" />
    <path d="M14.300 14.300l4.400 4.400M18.700 14.300l-4.400 4.400" stroke="#fff" strokeWidth="1.5" />
  </svg>
);
const SyncIcon = () => (
  <svg width="24" height="24" viewBox="0 0 24 24" fill="none" stroke="#f2f2f2" strokeWidth="1.5">
    <path d="M2.500 11Q3.500 3 12 2.500Q17.500 2.500 20.500 7M20.700 2v5.500h-5.500M12 21.500Q6 21.500 3.500 17M3.200 22v-5.500h5.500" />
    <circle cx="17" cy="17" r="5.2" fill="#ff9f0f" stroke="none" />
  </svg>
);
const WifiIcon = () => (
  <svg width="22" height="20" viewBox="0 0 22 20" fill="none" stroke="#fff" strokeWidth="1.5" strokeLinecap="round">
    <path d="M1.500 7.200Q11-2.500 20.500 7.200M4.500 10.300Q11 3.500 17.500 10.300M7.500 13.300Q11 9.500 14.500 13.300" />
    <circle cx="11" cy="15.500" r="1.4" fill="#fff" />
  </svg>
);
const SpeakerIcon = () => (
  <svg width="22" height="20" viewBox="0 0 22 20" fill="none" stroke="#fff" strokeWidth="1.4" strokeLinecap="round" strokeLinejoin="round">
    <path d="M1.500 7v6h3.500l5 4.500v-15L5 7zM13 7q2 3 0 6M15.500 4.500q4 5.500 0 11M18 2.200q5 7.800 0 15.600" />
  </svg>
);
const BatteryIcon = () => (
  <svg width="22" height="20" viewBox="0 0 22 20" fill="none" stroke="#fff" strokeWidth="1.5">
    <path d="M11 4h5.500q2 0 2 2v8.500q0 2-2 2H6M20.200 8v4.500" strokeWidth="1.700" />
    <path d="M2 13Q.5 5 7.500 0Q12 7 8.500 12Q6 14.500 4 13.300z" fill="#fff" stroke="none" />
    <path d="M1 17l6-9" stroke="#1c1c1c" strokeWidth="1" />
    <path d="M1.500 16.500l3-3" />
  </svg>
);

const apps: { Icon: React.FC; run?: boolean; active?: boolean }[] = [
  { Icon: TaskViewIcon },
  { Icon: FolderIcon, run: true },
  { Icon: CopilotIcon },
  { Icon: McAfeeIcon },
  { Icon: EdgeIcon },
  { Icon: StoreIcon },
  { Icon: YoutubeIcon },
  { Icon: HpIcon },
  { Icon: () => <HelpWrap><HelpIcon /></HelpWrap> },
  { Icon: ChromeIcon, run: true },
  { Icon: ExcelIcon, run: true, active: true },
  { Icon: SettingsIcon, run: true },
];

export default function App() {
  return (
    <Screen>
      <GlobalStyle />
      <TitleBar>
        <svg width="90" height="25" viewBox="1830 0 90 25">
          <g fill="#fff"><circle cx="1833" cy="11.5" r="2" /><circle cx="1840.5" cy="11.5" r="2" /><circle cx="1848" cy="11.5" r="2" /></g>
          <path d="M1882.800 5.800l12.400 12.400M1895.200 5.800l-12.400 12.400" stroke="#fff" strokeWidth="1.5" />
        </svg>
      </TitleBar>

      <Workspace>
        <Sheet>
          <Sidebar>
            <LogoBox><Logo /></LogoBox>
            <SideTitle>Inventory Management system</SideTitle>
            {nav.map(({ label, Icon, gap, low }) => (
              <NavItem key={label} $gap={gap}>
                <Icon />
                <NavLabel $low={low}>{label}</NavLabel>
              </NavItem>
            ))}
          </Sidebar>

          <Main>
            <Banner>Inventory Management system</Banner>
            <Cards>
              {cards.map((c) => (
                <Card key={c.label} $up={c.up}>
                  <Strip $color={c.color} $dy={c.strip} />
                  <CardBody>
                    <CardLabel $x={c.lx}>{c.label}</CardLabel>
                    <CardValue $x={c.bx} $dy={c.by} $big={c.big}>{c.value}</CardValue>
                  </CardBody>
                </Card>
              ))}
            </Cards>

            <Panels>
              <Charts>
                <ChartRow>
                  <ChartCard $w={312} $h={198}>
                    <BarChart
                      x={313} y={263} w={312} h={198} title="Top 5 Products" tx={468.5} ty={298} tl={139}
                      axisX={418} labelX={403.5} base={324} dy={0}
                      rows={[['Mouse', 485, 345, 41], ['Headphones', 530, 377.5, 76.6], ['Smart Watch', 553, 410, 80]]}
                      ticks={[['0', 417.5], ['10', 463], ['20', 508], ['30', 553], ['40', 598.5]]}
                    />
                  </ChartCard>
                  <ChartCard $w={310} $h={197}>
                    <BarChart
                      x={636} y={264} w={310} h={197} title="Top 3 customers" tx={790.5} ty={299} tl={153}
                      axisX={745} labelX={730.5} base={325} dy={0.8}
                      rows={[['MK Tech.', 836, 346, 55.5], ['Rajesh Kumar', 840, 378, 82.5], ['Atul Ltd.', 873, 409, 51]]}
                      ticks={[['0', 744.5], ['200000', 824], ['400000', 904]]}
                    />
                  </ChartCard>
                </ChartRow>
                <ChartCard $w={634} $h={328}>
                  <StockChart />
                </ChartCard>
              </Charts>
              <Notes>
                <NotesHead>Notifications !</NotesHead>
                <NoteRow>
                  <svg width="17" height="19" viewBox="0 0 17 19">
                    <path d="M1.500 1.500Q3-.2 4.500 1L6.500 4.500Q6.500 6 5 7Q6 10 10 12.800Q11.500 11.500 12.500 12L16.500 15Q17 17 14.500 18.200Q9 19.500 4 12.500Q-1 5 1.500 1.500z" fill="#000" />
                  </svg>
                  <span>Wireless Printer Needs To ReOrder ! PH 9812xxxxxx</span>
                </NoteRow>
              </Notes>
            </Panels>
          </Main>

          <Tooltip>Chart Area</Tooltip>
          <QuickButton>
            <svg width="23" height="23" viewBox="0 0 23 23">
              <path d="M2 4h16v4.500H10.500V13H2z" fill="#000" />
              <path d="M2.500 4h8v4.500h-8z" fill="#3b82f6" />
              <path d="M2 3.500h16.500v5H2zM2 8.500h8V13.500H2zM10.200 3.500v5" fill="none" stroke="#b0b0b0" />
              <path d="M2.500 15v3.500h7.500V15" fill="none" stroke="#b0b0b0" strokeDasharray="1.5 1" />
              <path d="M15 12.500v6M12.200 15.500h5.800" stroke="#b0b0b0" strokeWidth="2" />
            </svg>
          </QuickButton>
          <Selection><FillHandle /></Selection>
        </Sheet>
        <VScroll>
          <VTrack>
            <svg width="12" height="9"><path d="M6 0q.8 0 1.300 1L11.500 7.500q.3 1.500-1 1.500h-9Q.2 9 .5 7.500L4.700 1Q5.200 0 6 0z" fill="#9b9b9b" /></svg>
            <VThumb />
            <svg width="12" height="9"><path d="M6 9q.8 0 1.300-1L11.500 1.500q.3-1.500-1-1.500h-9Q.2 0 .5 1.500L4.700 8Q5.200 9 6 9z" fill="#9b9b9b" /></svg>
          </VTrack>
        </VScroll>
      </Workspace>

      <TabBar>
        <TabNav>
          <svg width="137" height="39" viewBox="0 980 137 39" fill="none" strokeWidth="1.5">
            <path d="M39 991.500l-6.500 6.700 6.500 6.700" stroke="#d6d6d6" />
            <path d="M73 991.500l6.500 6.700-6.500 6.700" stroke="#8d8d8a" />
            <g fill="#e0e0e0"><circle cx="110.3" cy="998" r="2" /><circle cx="115.3" cy="998" r="2" /><circle cx="120.3" cy="998" r="2" /></g>
          </svg>
        </TabNav>
        <Tab $w={101}>Purchase</Tab>
        <Tab $w={113}>New Entry</Tab>
        <Tab $w={101}>Products</Tab>
        <Tab $w={97}>Vendors</Tab>
        <Tab $w={115}>Customers</Tab>
        <ActiveSlot>
          <ActiveTab>
            Dashboard
            <TabLine />
          </ActiveTab>
        </ActiveSlot>
        <Tab $w={71}>Pivot</Tab>
        <svg width="314" height="39" viewBox="853 980 314 39">
          <path d="M905.500 998h14M912.500 991v14" stroke="#e2e2e2" strokeWidth="1.5" />
          <g fill="#e0e0e0"><circle cx="1156" cy="993.5" r="1.5" /><circle cx="1156" cy="999" r="1.5" /><circle cx="1156" cy="1004.5" r="1.5" /></g>
        </svg>
        <HScroll>
          <svg width="9" height="12"><path d="M0 6q0-.8 1-1.300L7.500.5Q9 .2 9 1.500v9q0 1.300-1.500 1L1 7.300Q0 6.800 0 6z" fill="#9b9b9b" /></svg>
          <HThumb />
          <svg width="9" height="12"><path d="M9 6q0-.8-1-1.300L1.500.5Q0 .2 0 1.500v9q0 1.300 1.500 1L8 7.300Q9 6.800 9 6z" fill="#9b9b9b" /></svg>
        </HScroll>
      </TabBar>

      <Taskbar>
        <Weather>
          <WeatherIcon />
          <Lines>
            23°C
            <Dim>Mostly clear</Dim>
          </Lines>
        </Weather>
        <StartIcon />
        <SearchBox>
          <svg width="20" height="20" viewBox="0 0 20 20" fill="none" stroke="#e2e2e2" strokeWidth="2">
            <circle cx="8.5" cy="8.5" r="7" fill="#555" /><path d="M13.500 13.500l4.500 4.500" strokeLinecap="round" />
          </svg>
          <SearchText>Search</SearchText>
          <TreeArt />
        </SearchBox>
        {apps.map(({ Icon, run, active }, i) => (
          <AppSlot key={i} $active={active}>
            <Icon />
            {run && <Running $active={active} />}
          </AppSlot>
        ))}
        <Tray>
          <TraySlot $w={40}>
            <svg width="16" height="10" viewBox="0 0 16 10"><path d="M1.500 8.500L8 2l6.500 6.500" fill="none" stroke="#fff" strokeWidth="1.9" /></svg>
          </TraySlot>
          <TraySlot $w={40}><CloudError /></TraySlot>
          <TraySlot $w={40}><SyncIcon /></TraySlot>
          <Lines $align="center" $w={60} $pad={4}>
            ENG<br />IN
          </Lines>
          <TraySlot $w={30}><WifiIcon /></TraySlot>
          <TraySlot $w={30}><SpeakerIcon /></TraySlot>
          <TraySlot $w={30}><BatteryIcon /></TraySlot>
          <Lines $align="right" $w={117} $pad={25}>
            00:28<br />22-03-2025
          </Lines>
        </Tray>
      </Taskbar>
    </Screen>
  );
}
